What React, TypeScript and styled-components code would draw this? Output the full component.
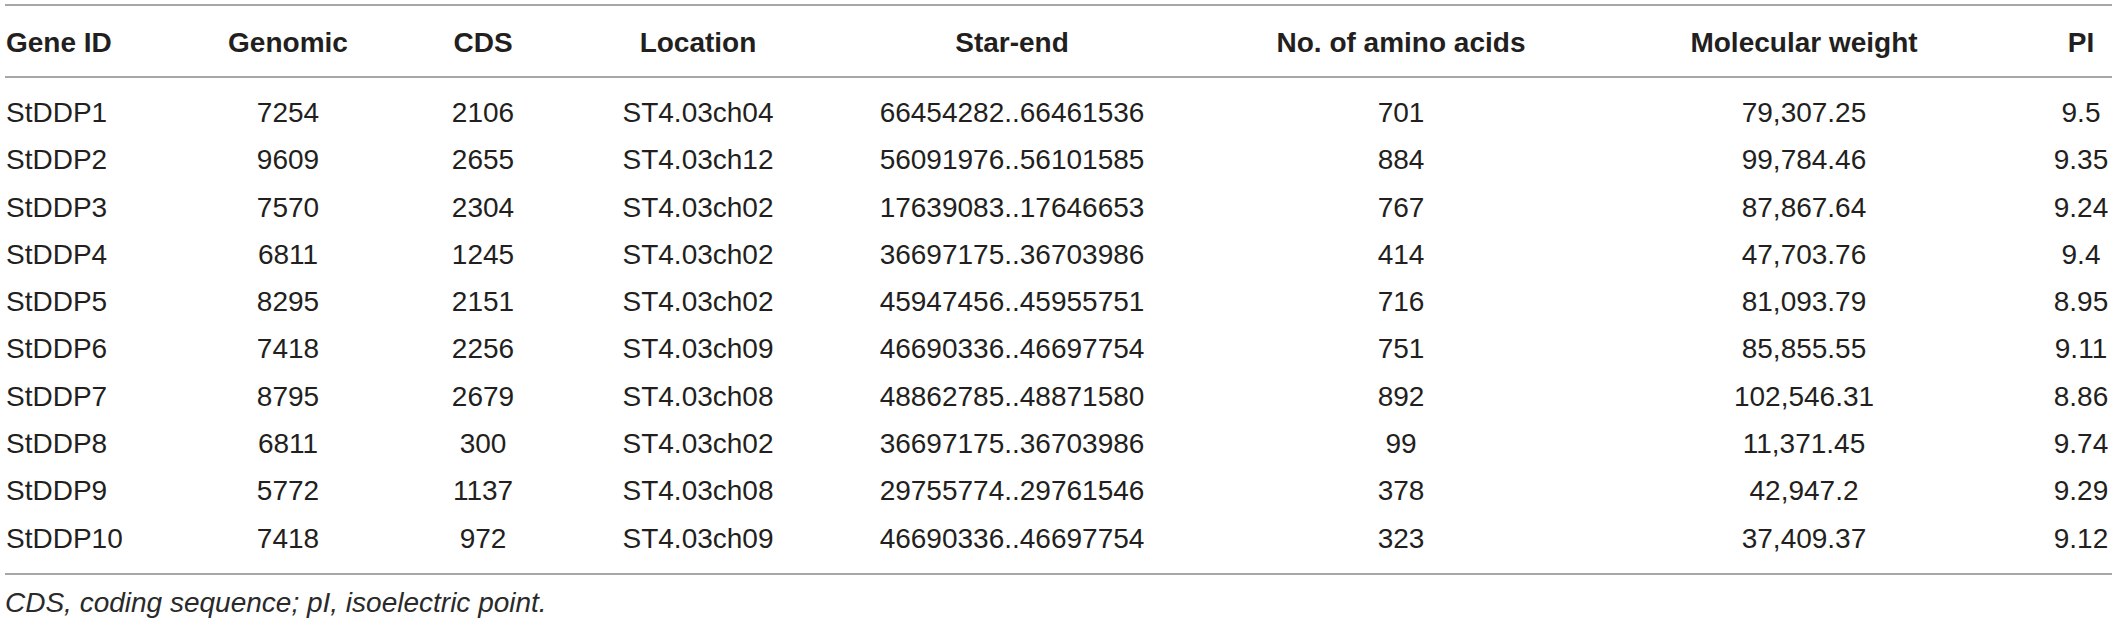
import React from "react"
import styled, { createGlobalStyle } from "styled-components"

type GeneRow = {
  id: string
  genomic: string
  cds: string
  location: string
  range: string
  aminoAcids: string
  weight: string
  pi: string
}

const columns = [
  "Gene ID",
  "Genomic",
  "CDS",
  "Location",
  "Star-end",
  "No. of amino acids",
  "Molecular weight",
  "PI",
]

const rows: GeneRow[] = [
  { id: "StDDP1", genomic: "7254", cds: "2106", location: "ST4.03ch04", range: "66454282..66461536", aminoAcids: "701", weight: "79,307.25", pi: "9.5" },
  { id: "StDDP2", genomic: "9609", cds: "2655", location: "ST4.03ch12", range: "56091976..56101585", aminoAcids: "884", weight: "99,784.46", pi: "9.35" },
  { id: "StDDP3", genomic: "7570", cds: "2304", location: "ST4.03ch02", range: "17639083..17646653", aminoAcids: "767", weight: "87,867.64", pi: "9.24" },
  { id: "StDDP4", genomic: "6811", cds: "1245", location: "ST4.03ch02", range: "36697175..36703986", aminoAcids: "414", weight: "47,703.76", pi: "9.4" },
  { id: "StDDP5", genomic: "8295", cds: "2151", location: "ST4.03ch02", range: "45947456..45955751", aminoAcids: "716", weight: "81,093.79", pi: "8.95" },
  { id: "StDDP6", genomic: "7418", cds: "2256", location: "ST4.03ch09", range: "46690336..46697754", aminoAcids: "751", weight: "85,855.55", pi: "9.11" },
  { id: "StDDP7", genomic: "8795", cds: "2679", location: "ST4.03ch08", range: "48862785..48871580", aminoAcids: "892", weight: "102,546.31", pi: "8.86" },
  { id: "StDDP8", genomic: "6811", cds: "300", location: "ST4.03ch02", range: "36697175..36703986", aminoAcids: "99", weight: "11,371.45", pi: "9.74" },
  { id: "StDDP9", genomic: "5772", cds: "1137", location: "ST4.03ch08", range: "29755774..29761546", aminoAcids: "378", weight: "42,947.2", pi: "9.29" },
  { id: "StDDP10", genomic: "7418", cds: "972", location: "ST4.03ch09", range: "46690336..46697754", aminoAcids: "323", weight: "37,409.37", pi: "9.12" },
]

const GlobalStyle = createGlobalStyle`
  body {
    background: #ffffff;
    margin: 0;
  }
`

const Page = styled.div`
  color: #231f20;
  font-family: "Liberation Sans", Arial, sans-serif;
  font-size: 28px;
  padding: 4px 5px 0 5px;
  width: 2107px;
`

const RULE = "2px solid #a7a7a7"

const Table = styled.div`
  border-top: ${RULE};
  display: flex;
  flex-direction: column;
`

const Head = styled.div`
  border-bottom: ${RULE};
  padding: 13px 0 10px 0;
`

const Body = styled.div`
  border-bottom: ${RULE};
  padding: 11px 0 11px 0;
`

const Row = styled.div`
  display: grid;
  grid-template-columns: 221px 124px 266px 164px 464px 314px 492px 62px;
  height: ${({ $height }: { $height: number }) => $height}px;
  line-height: ${({ $height }: { $height: number }) => $height}px;
`

const Cell = styled.div`
  font-weight: ${({ $bold }: { $bold?: boolean }) => ($bold ? 700 : 400)};
  overflow: visible;
  text-align: center;
  white-space: nowrap;

  &:first-child {
    padding-left: 1px;
    text-align: left;
  }
`

const Footnote = styled.div`
  color: #2a2a2a;
  font-style: italic;
  line-height: 40px;
  padding-top: 8px;
`

const App = () => {
  return (
    <>
      <GlobalStyle />
      <Page>
        <Table>
          <Head>
            <Row $height={47}>
              {columns.map(title => (
                <Cell key={title} $bold>
                  {title}
                </Cell>
              ))}
            </Row>
          </Head>
          <Body>
            {rows.map(row => (
              <Row key={row.id} $height={47.3}>
                <Cell>{row.id}</Cell>
                <Cell>{row.genomic}</Cell>
                <Cell>{row.cds}</Cell>
                <Cell>{row.location}</Cell>
                <Cell>{row.range}</Cell>
                <Cell>{row.aminoAcids}</Cell>
                <Cell>{row.weight}</Cell>
                <Cell>{row.pi}</Cell>
              </Row>
            ))}
          </Body>
        </Table>
        <Footnote>CDS, coding sequence; pI, isoelectric point.</Footnote>
      </Page>
    </>
  )
}

export default App
